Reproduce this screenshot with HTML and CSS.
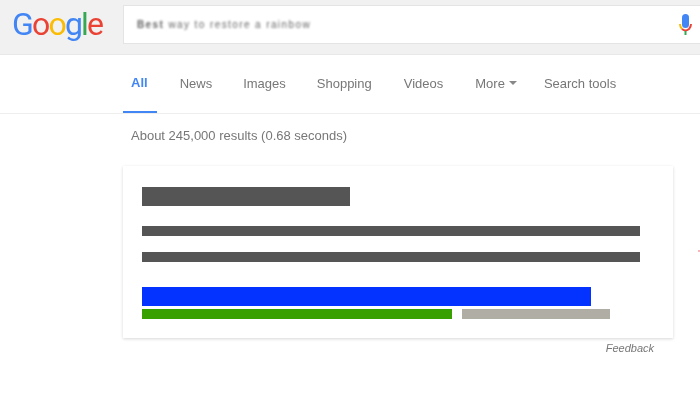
FILE: index.html
```html
<!DOCTYPE html>
<html lang="en">
<head>
  <meta charset="UTF-8" />
  <title>Google Search</title>
  <link rel="stylesheet" href="styles.css">
</head>
<body>
  <div class="header">
    <div class="logo"><span class="blue">G</span><span class="red">o</span><span class="yellow">o</span><span class="blue">g</span><span class="green">l</span><span class="red">e</span></div>
    <div class="search-box">
      <div class="query"><b>Best</b> way to restore a rainbow</div>
      <svg class="mic" width="13" height="21" viewBox="0 0 13 21">
        <path d="M1 10a5.500 6.500 0 0 0 2 5" fill="none" stroke="#fbbc05" stroke-width="2"/>
        <path d="M3 15a5.500 5.500 0 0 0 7 0a5.500 6.500 0 0 0 2-5" fill="none" stroke="#ea4335" stroke-width="2"/>
        <rect x="5.500" y="17" width="2" height="4" fill="#34a853"/>
        <rect x="3" y="0" width="7" height="14" rx="3.500" fill="#4285f4"/>
      </svg>
    </div>
  </div>

  <div class="tabs">
    <a class="tab active">All</a>
    <a class="tab">News</a>
    <a class="tab">Images</a>
    <a class="tab wide">Shopping</a>
    <a class="tab wide">Videos</a>
    <a class="tab more">More<span class="caret"></span></a>
    <a class="tab">Search tools</a>
  </div>

  <div class="stats">About 245,000 results (0.68 seconds)</div>

  <div class="card">
    <div class="bar title-bar"></div>
    <div class="bar line-bar"></div>
    <div class="bar line-bar second"></div>
    <div class="bar link-bar"></div>
    <div class="url-row">
      <div class="bar url-bar"></div>
      <div class="bar date-bar"></div>
    </div>
  </div>
  <div class="feedback">Feedback</div>

  <div class="edge-mark"></div>
</body>
</html>
```

FILE: styles.css
```css
* {
  margin: 0;
  padding: 0;
  box-sizing: border-box;
}

body {
  position: relative;
  width: 700px;
  height: 400px;
  overflow: hidden;
  background: #fff;
  font-family: "Liberation Sans", Arial, sans-serif;
  color: #777;
}

.header {
  display: flex;
  height: 55px;
  padding: 5px 0 0 12px;
  background: #f1f1f1;
  border-bottom: 1px solid #e8e8e8;
}

.logo {
  flex-shrink: 0;
  width: 111px;
  height: 40px;
  padding-top: 1px;
  font-family: Roboto, sans-serif;
  font-size: 32px;
  line-height: 36px;
  letter-spacing: -1.8px;
  filter: blur(0.4px);
}

.blue { color: #4285f4; }
.red { color: #ea4335; }
.yellow { color: #fbbc05; }
.green { color: #34a853; }

.search-box {
  display: flex;
  align-items: center;
  justify-content: space-between;
  width: 577px;
  height: 39px;
  padding: 0 8px 0 13px;
  background: #fff;
  border: 1px solid #e4e4e4;
  border-right: none;
}

.query {
  width: 190px;
  font-size: 10px;
  letter-spacing: 1.4px;
  white-space: nowrap;
  color: #666;
  filter: blur(0.8px);
}

.tabs {
  display: flex;
  height: 59px;
  padding-left: 123px;
  border-bottom: 1px solid #eee;
}

.tab {
  display: flex;
  align-items: center;
  height: 58px;
  margin-right: 15px;
  padding: 0 8px 2px;
  font-size: 13px;
  color: #777;
  white-space: nowrap;
  filter: blur(0.3px);
}

.tab.wide {
  margin-right: 16px;
}

.tab.more {
  margin-right: 11px;
}

.tab.active {
  padding-right: 9px;
  font-weight: bold;
  color: #4285f4;
  border-bottom: 2px solid #4285f4;
}

.caret {
  width: 0;
  height: 0;
  margin-left: 4px;
  border-left: 4px solid transparent;
  border-right: 4px solid transparent;
  border-top: 4px solid #888;
}

.stats {
  height: 52px;
  padding: 14px 0 0 131px;
  font-size: 13px;
  line-height: 16px;
  color: #777;
  filter: blur(0.3px);
}

.card {
  width: 550px;
  height: 172px;
  margin-left: 123px;
  padding: 21px 33px 0 19px;
  background: #fff;
  box-shadow: 0 1px 3px rgba(0, 0, 0, 0.16);
}

.bar {
  height: 10px;
}

.title-bar {
  width: 208px;
  height: 19px;
  background: #555;
}

.line-bar {
  margin-top: 20px;
  background: #555;
}

.line-bar.second {
  margin-top: 16px;
}

.link-bar {
  width: 449px;
  height: 19px;
  margin-top: 25px;
  background: #0433ff;
}

.url-row {
  display: flex;
  gap: 10px;
  margin-top: 3px;
}

.url-bar {
  width: 310px;
  background: #38a000;
}

.date-bar {
  width: 148px;
  background: #b0ada5;
}

.feedback {
  width: 654px;
  padding-top: 3px;
  font-size: 11px;
  line-height: 14px;
  font-style: italic;
  text-align: right;
  color: #777;
  filter: blur(0.3px);
}

.edge-mark {
  position: absolute;
  top: 250px;
  left: 698px;
  width: 2px;
  height: 2px;
  background: #f4b6b6;
}
```
